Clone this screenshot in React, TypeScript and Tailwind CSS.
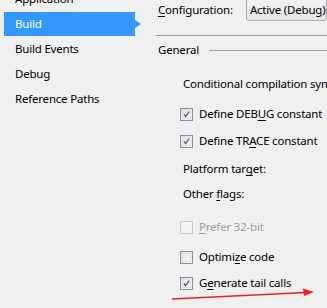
import React from 'react';

const font = { fontFamily: '"Noto Sans", "Open Sans", sans-serif' };

const Check: React.FC<{ checked?: boolean; disabled?: boolean }> = ({ checked, disabled }) => (
  <span
    className={`w-[13px] h-[13px] border flex items-center justify-center shrink-0 ${
      disabled ? 'border-[#c8c8c8] bg-[#f4f4f4]' : 'border-[#8e8f8f] bg-gradient-to-br from-[#dcdcdc] to-[#f8f8f8]'
    }`}
  >
    {!disabled && (
      <span className="w-[9px] h-[9px] border border-[#e0e0e0] bg-gradient-to-br from-[#e6e6e6] to-[#fafafa] flex items-center justify-center">
        {checked && (
          <svg width="9" height="9" viewBox="0 0 9 9">
            <path d="M1.2 4.3 L3.4 7.2 L7.8 0.8" fill="none" stroke="#4a5f97" strokeWidth="1.7" />
          </svg>
        )}
      </span>
    )}
  </span>
);

const U: React.FC<{ children: React.ReactNode }> = ({ children }) => <span className="underline underline-offset-2">{children}</span>;

const CheckRow: React.FC<{ checked?: boolean; disabled?: boolean; children: React.ReactNode }> = ({ checked, disabled, children }) => (
  <div className={`flex items-center gap-[6px] pl-[24px] h-[20px] ${disabled ? 'text-[#a0a0a0]' : ''}`}>
    <Check checked={checked} disabled={disabled} />
    <span className="whitespace-nowrap">{children}</span>
  </div>
);

const App: React.FC = () => {
  const items = ['Application', 'Build', 'Build Events', 'Debug', 'Reference Paths'];
  return (
    <div className="relative w-[327px] h-[308px] overflow-hidden bg-[#f0f0f0] text-[11.5px] tracking-[-0.2px] text-black flex" style={font}>
      <div className="w-[140px] shrink-0 flex flex-col mt-[-13px]">
        {items.map((it) => (
          <div key={it} className="relative h-6 mb-px flex items-center">
            {it === 'Build' ? (
              <div className="relative ml-[4px] w-[131px] h-6 bg-[#3399ff] text-white flex items-center pl-[11px]">
                {it}
                <span className="absolute right-[-6px] top-[8px] w-0 h-0 border-y-[4px] border-y-transparent border-l-[6px] border-l-[#3399ff]" />
              </div>
            ) : (
              <span className="pl-[15px]">{it}</span>
            )}
          </div>
        ))}
      </div>

      <div className="flex-1 min-w-0 flex flex-col pl-[16px]">
        <div className="flex items-center h-[21px] mt-[-1px]">
          <span className="pl-[2px] whitespace-nowrap">
            <U>C</U>onfiguration:
          </span>
          <div className="ml-[13px] h-[22px] flex-1 border border-[#acacac] rounded-b-[3px] bg-gradient-to-b from-[#f2f2f2] to-[#e5e5e5] flex items-center pl-[3px] whitespace-nowrap overflow-hidden">
            Active (Debug)
          </div>
        </div>

        <div className="mt-[15px] h-px bg-[#a0a0a0]" />

        <div className="mt-[6px] flex items-center h-[16px]">
          <span className="pl-[2px] pr-[10px]">General</span>
          <div className="flex-1 h-px bg-[#a0a0a0]" />
        </div>

        <div className="mt-[16px] pl-[27px] h-[20px] flex items-center whitespace-nowrap">
          <span>Conditional compilation symbols:</span>
        </div>

        <div className="mt-[10px]">
          <CheckRow checked>
            Define DEB<U>U</U>G constant
          </CheckRow>
        </div>
        <div className="mt-[7px]">
          <CheckRow checked>
            Define TR<U>A</U>CE constant
          </CheckRow>
        </div>

        <div className="mt-[8px] pl-[27px] h-[20px] flex items-center whitespace-nowrap">
          <span>
            Platform tar<U>g</U>et:
          </span>
        </div>
        <div className="mt-[5px] pl-[27px] h-[20px] flex items-center whitespace-nowrap">
          <span>
            Other <U>f</U>lags:
          </span>
        </div>

        <div className="mt-[13px]">
          <CheckRow disabled>
            <U>P</U>refer 32-bit
          </CheckRow>
        </div>
        <div className="mt-[10px]">
          <CheckRow>
            Optimi<U>z</U>e code
          </CheckRow>
        </div>
        <div className="mt-[6px]">
          <CheckRow checked>
            G<U>e</U>nerate tail calls
          </CheckRow>
        </div>
      </div>

      <svg className="absolute left-0 top-0 pointer-events-none" width="327" height="308" viewBox="0 0 327 308">
        <line x1="172" y1="299" x2="306" y2="292.4" stroke="#ee2020" strokeWidth="1.5" />
        <path d="M314 292 L303 288.5 L304 296 Z" fill="#ee2020" />
      </svg>
    </div>
  );
};

export default App;
